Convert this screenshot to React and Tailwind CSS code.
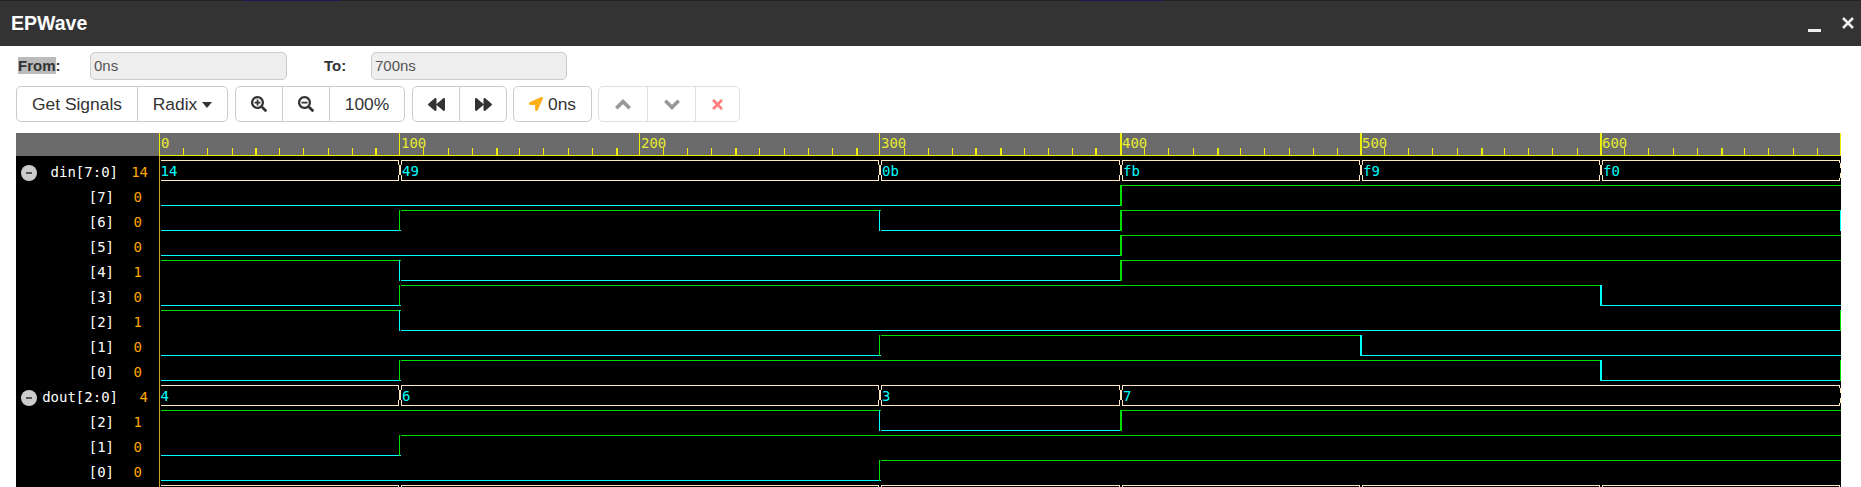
import { FaSearchPlus, FaSearchMinus, FaBackward, FaForward, FaLocationArrow, FaTimes } from "react-icons/fa";

const MONO = "font-['DejaVu_Sans_Mono',monospace]";

// pixel column of each time marker, 0ns to 700ns
const EDGES = [159, 399, 639, 879, 1120, 1360, 1600, 1840];
const EDGE_W = [1, 1, 1, 1, 2, 2, 2, 1];
const THICK_TICKS = [255, 375, 496, 616, 735, 856, 975, 1000, 1095, 1217, 1481, 1721];
const TICKS = [
  183, 207, 232, 255, 279, 303, 328, 352, 375,
  423, 448, 472, 496, 519, 543, 568, 592, 616,
  663, 687, 711, 735, 759, 784, 808, 832, 856,
  904, 928, 952, 975, 1000, 1024, 1048, 1072, 1095,
  1144, 1168, 1193, 1217, 1240, 1264, 1289, 1313, 1337,
  1384, 1408, 1432, 1457, 1481, 1504, 1528, 1552, 1577,
  1624, 1648, 1673, 1697, 1721, 1744, 1768, 1793, 1817,
];

const GREEN = "#00dd00";
const CYAN = "#00ffff";
const BUS = "#ffe8c0";

// sampled at each marker: 0,100,...,700
const DIN = [0x14, 0x49, 0x49, 0x0b, 0xfb, 0xf9, 0xf0, 0xb5];
const DOUT = [4, 6, 6, 3, 7, 7, 7, 7];

const ROWS = [
  { name: "din[7:0]", value: "14", group: true },
  ...[7, 6, 5, 4, 3, 2, 1, 0].map((b) => ({ name: `[${b}]`, value: String((DIN[0] >> b) & 1) })),
  { name: "dout[2:0]", value: "4", group: true },
  ...[2, 1, 0].map((b) => ({ name: `[${b}]`, value: String((DOUT[0] >> b) & 1) })),
];

function Bit({ top, samples, bit }) {
  const parts = [];
  for (let i = 0; i < 7; i++) {
    const v = (samples[i] >> bit) & 1;
    const end = i === 6 ? 1841 : EDGES[i + 1] + 2;
    parts.push(
      <rect key={`s${i}`} x={EDGES[i] + 2} y={v ? top : top + 20} width={end - EDGES[i] - 2} height="1" fill={v ? GREEN : CYAN} />
    );
    const next = (samples[i + 1] >> bit) & 1;
    if (next !== v) {
      parts.push(
        <rect key={`e${i}`} x={EDGES[i + 1]} y={top} width={EDGE_W[i + 1]} height="21" fill={next ? GREEN : CYAN} />
      );
    }
  }
  return <g>{parts}</g>;
}

function Bus({ top, marks, labels }) {
  return (
    <g>
      {marks.slice(0, -1).map((m, i) => {
        const from = EDGES[m] + 2;
        const to = EDGES[marks[i + 1]] - 1;
        return (
          <g key={m}>
            <rect x={from} y={top} width={to - from + 1} height="1" fill={BUS} />
            <rect x={from} y={top + 20} width={to - from + 1} height="1" fill={BUS} />
          </g>
        );
      })}
      {marks.slice(1).map((m) => {
        const x = EDGES[m];
        const d = m === 7
          ? `M${x - 1} ${top + 0.5}L${x} ${top + 3}L${x + 1} ${top + 8}M${x + 1} ${top + 13}L${x} ${top + 18}L${x - 1} ${top + 20.5}`
          : `M${x - 1} ${top + 0.5}L${x} ${top + 5}L${x + 1} ${top + 10}L${x} ${top + 15}L${x - 1} ${top + 20.5}M${x + 3} ${top + 0.5}L${x + 2} ${top + 5}L${x + 1} ${top + 10}L${x + 2} ${top + 15}L${x + 3} ${top + 20.5}`;
        return <path key={m} d={d} stroke={BUS} strokeWidth="1" fill="none" />;
      })}
      {labels &&
        labels.map(([m, t]) => (
          <text key={m} x={EDGES[m] + (m === 0 ? 1.5 : 3)} y={top + 16} fontFamily="DejaVu Sans Mono" fontSize="14" fill={CYAN}>
            {t}
          </text>
        ))}
    </g>
  );
}

function Waves() {
  return (
    <svg width="1682" height="354" viewBox="159 133 1682 354" shapeRendering="crispEdges" className="block">
      <rect x="159" y="133" width="1682" height="354" fill="#000" />
      <rect x="159" y="133" width="1682" height="22" fill="#6b6b6b" />
      <rect x="159" y="155" width="1682" height="1" fill="#eeee00" />
      <rect x="159" y="156" width="1" height="331" fill="#c9a227" />
      {EDGES.map((x, i) => (
        <rect key={x} x={x} y="133" width={EDGE_W[i]} height="23" fill="#eeee00" />
      ))}
      {TICKS.map((x) => (
        <rect key={x} x={x} y="148" width={THICK_TICKS.includes(x) ? 2 : 1} height="8" fill="#eeee00" />
      ))}
      {["0", "100", "200", "300", "400", "500", "600"].map((t, i) => (
        <text key={t} x={EDGES[i] + 2} y="148" fontFamily="DejaVu Sans Mono" fontSize="14" fill="#e6ec30">
          {t}
        </text>
      ))}

      <Bus top={160} marks={[0, 1, 3, 4, 5, 6, 7]} labels={[[0, "14"], [1, "49"], [3, "0b"], [4, "fb"], [5, "f9"], [6, "f0"]]} />
      {[7, 6, 5, 4, 3, 2, 1, 0].map((b, i) => (
        <Bit key={b} top={185 + i * 25} samples={DIN} bit={b} />
      ))}
      <Bus top={385} marks={[0, 1, 3, 4, 7]} labels={[[0, "4"], [1, "6"], [3, "3"], [4, "7"]]} />
      {[2, 1, 0].map((b, i) => (
        <Bit key={b} top={410 + i * 25} samples={DOUT} bit={b} />
      ))}
      <Bus top={485} marks={[0, 1, 3, 4, 5, 6, 7]} />
    </svg>
  );
}

function Chevron({ up }) {
  return (
    <svg width="16" height="11" viewBox="0 0 16 11" fill="none" stroke="#555" strokeWidth="3.6">
      <path d={up ? "M1.3 9.2L8 2.6L14.7 9.2" : "M1.3 1.8L8 8.4L14.7 1.8"} />
    </svg>
  );
}

function Btn({ className = "", children }) {
  return (
    <div className={`flex h-full items-center justify-center border-r border-[#ccc] last:border-r-0 ${className}`}>
      {children}
    </div>
  );
}

function Group({ className = "", children }) {
  return <div className={`flex h-[36px] rounded-[5px] border border-[#ccc] bg-white ${className}`}>{children}</div>;
}

export default function App() {
  return (
    <div className="h-[487px] w-[1861px] overflow-hidden bg-white font-['Liberation_Sans',Arial,sans-serif] text-[#333]">
      <div className="flex h-[46px] flex-col bg-[#333]">
        <div className="flex h-px bg-[#222]">
          <div className="ml-[242px] h-px w-[99px] bg-[#1a1a55]" />
          <div className="ml-[738px] h-px w-[83px] bg-[#1a1a55]" />
        </div>
        <div className="flex flex-1 items-center pl-[11px] pr-[6px]">
          <span className="text-[19.5px] font-bold leading-none text-white">EPWave</span>
          <div className="ml-auto mt-[14px] h-[3px] w-[13px] bg-[#eee]" />
          <svg width="14" height="14" viewBox="0 0 14 14" className="mb-[1px] ml-[20px]">
            <path d="M2 2L12 12M12 2L2 12" stroke="#eee" strokeWidth="2.6" fill="none" />
          </svg>
        </div>
      </div>

      <div className="mt-[6px] flex h-[28px] items-center pl-[18px] text-[15px]">
        <div className="w-[72px] font-bold leading-[20px]">
          <span className="bg-[#bbb]">From</span>:
        </div>
        <div className="flex h-[28px] w-[197px] items-center rounded-[5px] border border-[#ccc] bg-[#eee] pl-[3px] text-[#555]">
          0ns
        </div>
        <div className="ml-[37px] w-[47px] font-bold">To:</div>
        <div className="flex h-[28px] w-[196px] items-center rounded-[5px] border border-[#ccc] bg-[#eee] pl-[3px] text-[#555]">
          700ns
        </div>
      </div>

      <div className="ml-[16px] mt-[6px] flex gap-[7px] text-[17.4px]">
        <Group className="w-[212px]">
          <Btn className="w-[121px]">Get Signals</Btn>
          <Btn className="flex-1 gap-[5px]">
            Radix
            <span className="mt-[1px] border-x-[5px] border-t-[6px] border-x-transparent border-t-[#333]" />
          </Btn>
        </Group>
        <Group className="w-[170px]">
          <Btn className="w-[47px]"><FaSearchPlus size={16} /></Btn>
          <Btn className="w-[47px]"><FaSearchMinus size={16} /></Btn>
          <Btn className="flex-1">100%</Btn>
        </Group>
        <Group className="w-[95px]">
          <Btn className="w-[47px]"><FaBackward size={17} /></Btn>
          <Btn className="flex-1"><FaForward size={17} /></Btn>
        </Group>
        <Group className="ml-[-1px] w-[79px]">
          <Btn className="flex-1 gap-[5px]">
            <FaLocationArrow size={14} className="text-[#fdaf17]" />
            0ns
          </Btn>
        </Group>
        <Group className="ml-[-1px] w-[142px] opacity-60">
          <Btn className="w-[49px]"><Chevron up /></Btn>
          <Btn className="w-[48px]"><Chevron /></Btn>
          <Btn className="flex-1"><FaTimes size={15} className="text-[#ff2a2a]" /></Btn>
        </Group>
      </div>

      <div className="ml-[16px] mt-[11px] flex h-[354px] w-[1825px]">
        <div className="flex w-[143px] flex-col bg-black">
          <div className="mb-[4px] h-[23px] shrink-0 bg-[#6b6b6b]" />
          {ROWS.map((row, i) => (
            <div key={i} className={`flex h-[25px] shrink-0 items-center text-[14px] ${MONO}`}>
              {row.group && (
                <div className="ml-[5px] flex h-[16px] w-[16px] shrink-0 items-center justify-center rounded-full bg-[#ccc]">
                  <div className="h-[2px] w-[6px] bg-[#555]" />
                </div>
              )}
              <div className="ml-auto text-white">{row.name}</div>
              <div className={`text-right text-[#ffa500] ${row.group ? "mr-[11px] w-[30px]" : "mr-[17px] w-[28px]"}`}>{row.value}</div>
            </div>
          ))}
        </div>
        <Waves />
      </div>
    </div>
  );
}
